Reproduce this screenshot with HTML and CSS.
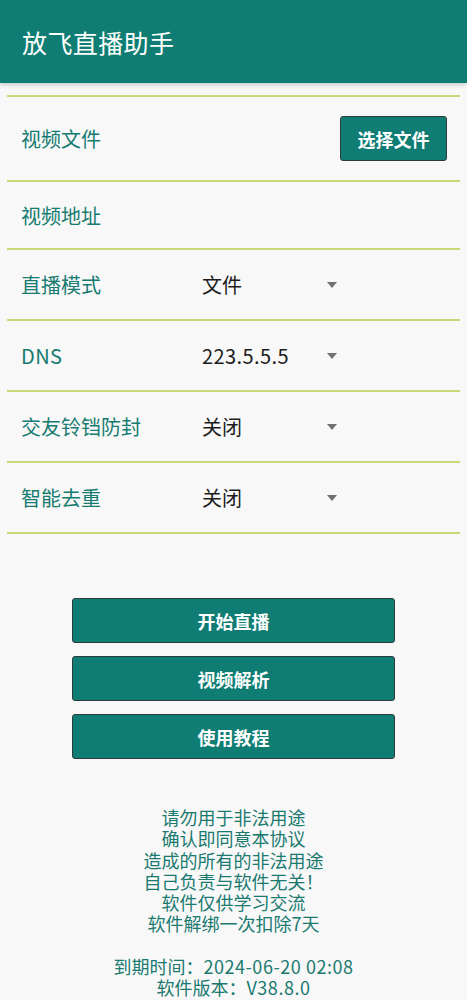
FILE: index.html
```html
<!DOCTYPE html>
<html lang="zh-CN">
<head>
<meta charset="utf-8">
<title>放飞直播助手</title>
<link rel="stylesheet" href="styles.css">
</head>
<body>
<header class="appbar"><h1 class="title">放飞直播助手</h1></header>
<main class="content">
  <div class="form">
    <div class="row row-file">
      <span class="label">视频文件</span>
      <button class="pick">选择文件</button>
    </div>
    <div class="row row-url">
      <span class="label">视频地址</span>
    </div>
    <div class="row">
      <span class="label">直播模式</span>
      <span class="value">文件</span>
      <span class="arrow"></span>
    </div>
    <div class="row">
      <span class="label latin">DNS</span>
      <span class="value latin">223.5.5.5</span>
      <span class="arrow"></span>
    </div>
    <div class="row">
      <span class="label">交友铃铛防封</span>
      <span class="value">关闭</span>
      <span class="arrow"></span>
    </div>
    <div class="row">
      <span class="label">智能去重</span>
      <span class="value">关闭</span>
      <span class="arrow"></span>
    </div>
  </div>
  <div class="actions">
    <button class="action">开始直播</button>
    <button class="action">视频解析</button>
    <button class="action">使用教程</button>
  </div>
  <div class="notice">
    <p>请勿用于非法用途</p>
    <p>确认即同意本协议</p>
    <p>造成的所有的非法用途</p>
    <p>自己负责与软件无关！</p>
    <p>软件仅供学习交流</p>
    <p>软件解绑一次扣除7天</p>
    <p class="blank">&nbsp;</p>
    <p>到期时间：<span class="num">2024-06-20 02:08</span></p>
    <p>软件版本：<span class="num">V38.8.0</span></p>
  </div>
</main>
</body>
</html>
```
FILE: styles.css
```css
* { box-sizing: border-box; }
html, body {
  margin: 0;
  padding: 0;
  background: #f8f8f8;
  font-family: "Noto Sans CJK SC", "Noto Sans", Roboto, sans-serif;
}
.appbar {
  height: 83px;
  background: #0f7d74;
  display: flex;
  align-items: center;
  padding-left: 22px;
  box-shadow: 0 2px 4px rgba(0,0,0,0.18);
}
.title {
  margin: 0;
  color: #ffffff;
  font-size: 25px;
  font-weight: 400;
  letter-spacing: 0.4px;
}
.content {
  padding: 12px 7px 0;
}
.form {
  border-top: 2px solid #c7da73;
}
.row {
  display: grid;
  grid-template-columns: 181px 125px 11px 1fr;
  align-items: center;
  padding-left: 14px;
  height: 71px;
  border-bottom: 2px solid #c7da73;
}
.row-file { height: 85px; display: flex; justify-content: space-between; padding-right: 13px; }
.row-url { height: 68px; }
.label {
  color: #167b71;
  font-size: 20px;
}
.value {
  color: #1c1c1c;
  font-size: 20px;
}
.latin { letter-spacing: 0.4px; }
.arrow {
  width: 0;
  height: 0;
  border-left: 5.5px solid transparent;
  border-right: 5.5px solid transparent;
  border-top: 6px solid #707070;
}
button {
  font-family: "Noto Sans CJK SC", "Noto Sans", sans-serif;
  cursor: pointer;
}
.pick {
  width: 107px;
  height: 45px;
  background: #107d74;
  color: #ffffff;
  border: 1px solid #2f3b39;
  border-radius: 3px;
  font-size: 18px;
  font-weight: 700;
  padding: 0;
}
.actions {
  display: flex;
  flex-direction: column;
  align-items: center;
  gap: 13px;
  margin-top: 64px;
}
.action {
  width: 323px;
  height: 45px;
  background: #107d74;
  color: #ffffff;
  border: 1px solid #2f3b39;
  border-radius: 3px;
  font-size: 18px;
  font-weight: 700;
  padding: 0;
}
.notice {
  margin-top: 48px;
  text-align: center;
  color: #1a7a70;
  font-size: 18px;
  line-height: 21.3px;
}
.notice p { margin: 0; }
.num { letter-spacing: 0.55px; }
```
